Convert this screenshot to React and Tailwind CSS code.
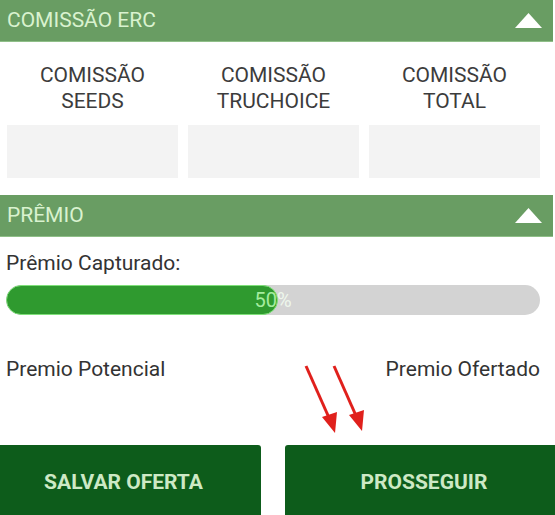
export default function App() {
  return (
    <div className="relative w-[555px] h-[515px] overflow-hidden bg-white font-['Roboto',sans-serif]">
      {/* Comissão ERC */}
      <SectionHeader title="COMISSÃO ERC" />
      <div className="pl-[7px] pr-[15px] pt-[20px]">
        <div className="grid grid-cols-3 gap-[10px]">
          <Commission line1="COMISSÃO" line2="SEEDS" />
          <Commission line1="COMISSÃO" line2="TRUCHOICE" />
          <Commission line1="COMISSÃO" line2="TOTAL" />
        </div>
      </div>

      {/* Prêmio */}
      <div className="mt-[17px]">
        <SectionHeader title="PRÊMIO" />
      </div>
      <div className="pl-[6px] pr-[15px]">
        <p className="mt-[13px] text-[21px] leading-[26px] text-[#333]">Prêmio Capturado:</p>
        <div className="relative mt-[9px] h-[30px] rounded-full bg-[#d3d3d3] overflow-hidden">
          <div className="h-full w-[51%] rounded-full bg-[#2f9a2f] border border-[#7fe07a]" />
          <span className="absolute inset-0 flex items-center justify-center text-[20px] text-[#eef7ec]">
            <span className="text-[#a5ec9f]">50</span>%
          </span>
        </div>
        <div className="mt-[41px] flex justify-between text-[21px] leading-[26px] text-[#333]">
          <span>Premio Potencial</span>
          <span>Premio Ofertado</span>
        </div>
      </div>

      <div className="absolute left-0 right-0 bottom-0 flex gap-[24px] h-[70px]">
        <button className="w-[261px] pt-[6px] pr-[14px] rounded-tr-[3px] bg-[#0d5c1b] text-[21px] font-bold text-[#cde9c5]">
          SALVAR OFERTA
        </button>
        <button className="flex-1 pt-[6px] pl-[8px] rounded-tl-[3px] bg-[#0d5c1b] text-[21px] font-bold text-[#cde9c5]">
          PROSSEGUIR
        </button>
      </div>

      {/* annotation arrows */}
      <svg className="absolute left-0 top-0 pointer-events-none" width="555" height="515">
        <line x1="306" y1="366" x2="330" y2="420" stroke="#e0201c" strokeWidth="3" />
        <path d="M322,417 L335,433 L337,412 Z" fill="#e0201c" />
        <line x1="334" y1="366" x2="357" y2="418" stroke="#e0201c" strokeWidth="3" />
        <path d="M349,415 L362,431 L364,410 Z" fill="#e0201c" />
      </svg>
    </div>
  )
}

function SectionHeader({ title }) {
  return (
    <div className="w-[553px] h-[42px] bg-[#699d63] flex items-center justify-between pl-[7px] pr-[11px] border-b border-[#8fbf88]">
      <span className="text-[21px] text-[#d9f2cf]">{title}</span>
      <svg width="27" height="15" viewBox="0 0 27 15">
        <path d="M13.5 0 L27 15 L0 15 Z" fill="#ffffff" />
      </svg>
    </div>
  )
}

function Commission({ line1, line2 }) {
  return (
    <div className="flex flex-col">
      <div className="text-center text-[21px] leading-[26px] text-[#3c3c3c]">
        <div>{line1}</div>
        <div>{line2}</div>
      </div>
      <div className="mt-[11px] h-[53px] bg-[#f3f3f3]" />
    </div>
  )
}
